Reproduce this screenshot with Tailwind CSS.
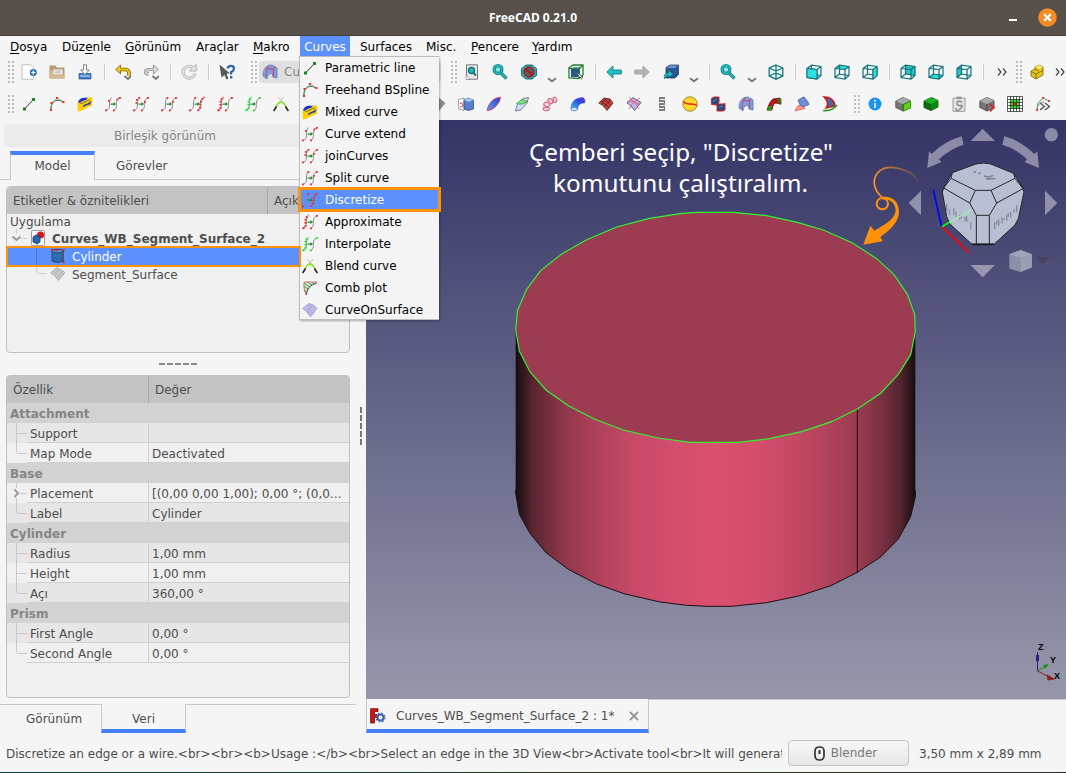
<!DOCTYPE html>
<html lang="tr">
<head>
<meta charset="utf-8">
<title>FreeCAD 0.21.0</title>
<script src="https://cdn.jsdelivr.net/npm/@tailwindcss/browser@4"></script>
</head>
<body class="w-[1066px] h-[773px] overflow-hidden bg-[#f5f5f5] text-[12px] text-[#4d4d4d] font-['DejaVu_Sans',sans-serif]">
<svg class="absolute size-0">
<defs>
<linearGradient id="gb" x1="0" x2="1" y1="1" y2="0"><stop stop-color="#9cc4ff"/><stop offset=".3" stop-color="#2f8ff0"/><stop offset=".6" stop-color="#2f4fe0"/><stop offset="1" stop-color="#6a2be0"/></linearGradient>
<linearGradient id="gl" x1="0" x2="1" y1="1" y2="0"><stop stop-color="#5b9bff"/><stop offset="1" stop-color="#1c45c8"/></linearGradient>
<symbol id="line" viewBox="0 0 16 16"><path d="M3.500 13 12.500 3.500" stroke="#333" fill="none"/><rect x="2" y="11.500" width="3" height="3" fill="#178a17"/><rect x="11" y="2" width="3" height="3" fill="#178a17"/></symbol>
<symbol id="free" viewBox="0 0 16 16"><path d="M2 15C1 9 4 5 8 4.500S13 6 15 6.500" stroke="#666" fill="none"/><path d="M2 14 3 7 8 2.500 15 6" stroke="#3db052" fill="none" stroke-width=".9"/><g fill="#f22"><rect x="1" y="13" width="2" height="2"/><rect x="1.500" y="6" width="2" height="2"/><rect x="7" y="1" width="2" height="2"/><rect x="13.500" y="5" width="2" height="2"/></g></symbol>
<symbol id="mixed" viewBox="0 0 16 16"><path d="M.5 7 4 4 14 1 15.500 2.500 15 10C11 10 8 14.500 .8 15.500Z" fill="#fc0"/><path d="M1 6C3 1 7 2 11 1.500L9 4C6 4 4 6.500 2 7Z" fill="#1634c9"/><path d="M6 10C8 7.500 10 8.500 14.500 5L13 8.500C10 8.500 8 10 6 11Z" fill="#1634c9"/><path d="M3 7.500C7 7.500 8 5 13 4" stroke="#8a8250" fill="none" stroke-width="1.200"/></symbol>
<symbol id="cv" viewBox="0 0 16 16"><path d="M.5 14.500C5 14 4.500 9 4.500 7S5 3 6.500 1.500M8.500 14.500C12.500 13 11 9 11.500 6S13 3 15.500 1.500" stroke="#888" fill="none"/><path d="M5.500 7.500H8.500V6L11 8 8.500 10V8.800H5.500Z" fill="#258a2c"/></symbol>
<symbol id="extend" viewBox="0 0 16 16"><use href="#cv"/><g fill="#f22"><rect y="13.500" width="1.800" height="1.800"/><rect x="8" y="13.500" width="1.800" height="1.800"/><rect x="3" y="4" width="1.800" height="1.800"/><rect x="14" y="1" width="1.800" height="1.800"/><rect x="11.500" y="2.500" width="1.800" height="1.800"/></g></symbol>
<symbol id="join" viewBox="0 0 16 16"><use href="#cv"/><g fill="#f22"><rect y="13.500" width="1.800" height="1.800"/><rect x="2.500" y="6" width="1.800" height="1.800"/><rect x="3" y="3" width="1.800" height="1.800"/><rect x="5.500" y="1" width="1.800" height="1.800"/><rect x="8" y="13.500" width="1.800" height="1.800"/><rect x="14" y="1" width="1.800" height="1.800"/><rect x="11" y="5" width="1.800" height="1.800"/></g></symbol>
<symbol id="split" viewBox="0 0 16 16"><use href="#cv"/><g fill="#f22"><rect y="13.500" width="1.800" height="1.800"/><rect x="5.500" y="1" width="1.800" height="1.800"/><rect x="8" y="13.500" width="1.800" height="1.800"/><rect x="14" y="1" width="1.800" height="1.800"/><rect x="11" y="5" width="1.800" height="1.800"/></g></symbol>
<symbol id="disc" viewBox="0 0 16 16"><use href="#cv"/><path d="M8.500 14.500C12.500 13 11 9 12 6S13 3 15.500 1" stroke="#f22" fill="none" stroke-width="1.900" stroke-dasharray="1.900 1.200"/><g fill="#f22"><rect y="13.500" width="1.800" height="1.800"/><rect x="5.500" y="1" width="1.800" height="1.800"/></g></symbol>
<symbol id="appr" viewBox="0 0 16 16"><use href="#cv"/><path d="M.5 14.500C5 14 3 9 3.500 6S5 3 6.500 1" stroke="#f22" fill="none" stroke-width="1.900" stroke-dasharray="1.900 1.200"/><g fill="#f22"><rect x="8" y="13.500" width="1.800" height="1.800"/><rect x="14" y="1" width="1.800" height="1.800"/></g></symbol>
<symbol id="inter" viewBox="0 0 16 16"><use href="#cv"/><path d="M.5 14.500C5 14 3 9 3.500 6S5 3 6.500 1" stroke="#1e2" fill="none" stroke-width="1.900" stroke-dasharray="1.900 1.200"/><g fill="#1e2"><rect x="8" y="13.500" width="1.800" height="1.800"/><rect x="14" y="1" width="1.800" height="1.800"/></g></symbol>
<symbol id="blend" viewBox="0 0 16 16"><path d="M5 1 9.500 6M11 1 6.500 6" stroke="#bbb" fill="none" stroke-width=".9"/><path d="M3 11C6 4.500 10 4.500 13 11" stroke="#8be02a" fill="none" stroke-width="1.600"/><path d="M.6 15 3.500 10.500M15.400 15 12.500 10.500" stroke="#222" stroke-width="1.600"/></symbol>
<symbol id="comb" viewBox="0 0 16 16"><path d="M2 2H15L9 6 5 14 2 11Z" fill="#cfe5d2"/><path d="M4.500 15C4.500 9 8 5 15 3" stroke="#444" fill="none"/><path d="M2 3 8 7M1.500 6 6 9M2 10 5 12M6 2 10 5M10 2 12 4" stroke="#2a9d3c" stroke-width=".9"/><path d="M15 2H2V7Q2 11 4 15" stroke="#d66" fill="none" stroke-width=".9"/></symbol>
<symbol id="cos" viewBox="0 0 16 16"><path d="M.5 6.500 7 1.500Q12 2 15 6.500L8.500 15Q5 9 .5 6.500Z" fill="#b4b8f5" stroke="#8a8fc5" stroke-width=".6"/><path d="M6.500 11Q6 6 11 4" stroke="#f09060" fill="none" stroke-width="1.200" stroke-dasharray="2 1"/></symbol>
<symbol id="new" viewBox="0 0 16 16"><path d="M1 .7H9.500L12.500 4V15.300H1Z" fill="#fff" stroke="#b5b5b5" stroke-width=".8"/><circle cx="12.300" cy="8.500" r="3.500" fill="#2e6db4"/><path d="M12.300 6.300v4.400M10.100 8.500h4.400" stroke="#fff" stroke-width="1.200"/></symbol>
<symbol id="open" viewBox="0 0 16 16"><path d="M.5 1.500H6.500L8 3.500H15.500V14.500H.5Z" fill="#b79b73"/><path d="M4.500 5.500h9v5H4.500Z" fill="#f8f8f8"/><path d="M6 7h6M6 8.800h6" stroke="#999" stroke-width=".8"/><path d="M.5 6.500H4V11H15.500v3.500H.5Z" fill="#d3ba94"/></symbol>
<symbol id="save" viewBox="0 0 16 16"><path d="M2 9.500H14V15H2Z" fill="#3f7cc4" stroke="#23558f" stroke-width=".7"/><path d="M3 12h10" stroke="#9fc4ef" stroke-width="1.500"/><path d="M6.500.8h3V6h2.800L8 10.500 3.700 6h2.800Z" fill="#fafafa" stroke="#777" stroke-width=".9"/></symbol>
<symbol id="undo" viewBox="0 0 16 16"><path d="M4.500 5.500H11Q14.500 6 14 12" stroke="#806000" fill="none" stroke-width="3.600"/><path d="M.7 5.500 5.500 1v9Z" fill="#f0c91e" stroke="#806000" stroke-width=".8"/><path d="M4.500 5.500H11Q14.500 6 14 12" stroke="#f0c91e" fill="none" stroke-width="2"/><path d="M9.500 12 13 15 16 12" stroke="#777" fill="none" stroke-width="1.800"/></symbol>
<symbol id="redo" viewBox="0 0 16 16"><path d="M11 5.500H5.500Q2 6 2.500 8T6 10" stroke="#888" fill="none" stroke-width="3.200"/><path d="M15.300 5.500 10.500 1v9Z" fill="#ddd" stroke="#888" stroke-width=".8"/><path d="M11 5.500H5.500Q2 6 2.500 8T6 10" stroke="#ddd" fill="none" stroke-width="1.600"/><path d="M9.500 12 13 15 16 12" stroke="#777" fill="none" stroke-width="1.800"/></symbol>
<symbol id="refr" viewBox="0 0 16 16"><path d="M12.500 4A6 6 0 1 0 14 9.500" stroke="#b0b0b0" fill="none" stroke-width="3"/><path d="M15.200 .5V7H8.500Z" fill="#e8e8e8" stroke="#b0b0b0"/><path d="M12.500 4A6 6 0 1 0 14 9.500" stroke="#eee" fill="none" stroke-width="1.200"/></symbol>
<symbol id="whats" viewBox="0 0 16 16"><path d="M8.500 4.500Q9 1.800 12 1.800T15 4.500Q15 7 12 8V10.500" stroke="#3565a4" fill="none" stroke-width="2.200"/><rect x="11" y="12" width="2.300" height="2.500" fill="#3565a4"/><path d="M.5.5 10.500 9 7.500 10 9.500 14.500 7.500 15.500 5.500 11 2.500 13.500Z" fill="#555c57"/></symbol>
<symbol id="wb" viewBox="0 0 16 16"><path d="M1 12C1 5 4 1 10 1L15 4V14L11 13Q11 9 9 9.500Q5.500 10 5 15Z" fill="#7ba0e2" stroke="#5a78bb" stroke-width=".8"/><path d="M4 13Q4 5 7 1.500M11.500 13V5L13 2.500M5 4.500 12 5" stroke="#d33a60" fill="none"/></symbol>
<symbol id="mag" viewBox="0 0 16 16"><path d="M9 9 14.500 14.500" stroke="#137f84" stroke-width="3.200"/><circle cx="6" cy="5.500" r="3.900" fill="#8fe3e6" stroke="#137f84" stroke-width="3.200"/><circle cx="6" cy="5.500" r="3.900" fill="none" stroke="#23bcc2" stroke-width="1.600"/><path d="M9.500 9.500 14.200 14.200" stroke="#23bcc2" stroke-width="1.600"/></symbol>
<symbol id="fit" viewBox="0 0 16 16"><path d="M2.500.8H13.500V15.200H2.500Z" fill="#e6e6e6" stroke="#777"/><circle cx="7.500" cy="6.500" r="3" fill="#1fb9be" stroke="#12747a" stroke-width="1.400"/><path d="M9.500 9 12 11.500" stroke="#12747a" stroke-width="2"/><path d="M2 11V15.500H6Z" fill="#fff" stroke="#777" stroke-width=".6"/></symbol>
<symbol id="nosty" viewBox="0 0 16 16"><path d="M.6 4.500 5 1H11L15.400 4.500V11.500L11 15H5L.6 11.500Z" fill="#20b5bb" stroke="#136a70"/><circle cx="8" cy="8" r="4.800" fill="#4a6669" stroke="#b81414" stroke-width="1.800"/><path d="M4.700 4.700 11.300 11.300" stroke="#b81414" stroke-width="2"/></symbol>
<symbol id="bsel" viewBox="0 0 16 16"><path d="M3 5 6 3H12V10L10 13H3Z" fill="#2b568c"/><path d="M3 5 6 3H12L10 5Z" fill="#7d9fc8"/><path d="M1 4 5 1H15V11L11 14.500 1 14V4L11 5V14M11 5 15 1" stroke="#1c7e2c" fill="none" stroke-width="1.300"/><path d="M8.500 8 15 13 12.500 13 14 15.500" fill="#fff" stroke="#333" stroke-width=".7"/></symbol>
<symbol id="back" viewBox="0 0 16 16"><path d="M.7 8 7 2V6H15.300V10H7V14Z" fill="#1fc0c5" stroke="#127479" stroke-width=".8"/></symbol>
<symbol id="fwd" viewBox="0 0 16 16"><path d="M15.300 8 9 2V6H.7V10H9V14Z" fill="#b5b5b5" stroke="#999" stroke-width=".8"/></symbol>
<symbol id="linked" viewBox="0 0 16 16"><path d="M3 3.500 7 1H15.500V10.500L12 14H3Z" fill="#2b5790" stroke="#173860" stroke-width=".7"/><path d="M3.500 4 7 1.500H15L12 4Z" fill="#6d98cf"/><path d="M1.500 15Q0 9 5.500 9V6.500L10 10 5.500 13.500V11.500Q2.500 11.500 1.500 15Z" fill="#1fc0c5" stroke="#127479" stroke-width=".7"/></symbol>
<symbol id="box" viewBox="0 0 16 16"><path d="M1 4.500 5.500 1.200 15 2.500V11.500L11 15 1 13.500ZM1 4.500 11 5.500V15M11 5.500 15 2.500M5.500 1.200V10L15 11.500M5.500 10 1 13.500" stroke="#137278" fill="none" stroke-width="1.200"/></symbol>
<symbol id="iso" viewBox="0 0 16 16"><path d="M8 1 14.800 4V12L8 15.200 1.200 12V4ZM1.200 4 8 7 14.800 4M8 7V15M8 1V6M1.200 12 8 9 14.800 12" fill="#e4f5f5" stroke="#15767c" stroke-width="1.300"/></symbol>
<symbol id="vf" viewBox="0 0 16 16"><use href="#box"/><path d="M1 4.500 11 5.500V15L1 13.500Z" fill="#2ddfe3" stroke="#137278"/></symbol>
<symbol id="vt" viewBox="0 0 16 16"><path d="M1 4.500 5.500 1.200 15 2.500 11 5.500Z" fill="#2ddfe3"/><use href="#box"/></symbol>
<symbol id="vr" viewBox="0 0 16 16"><use href="#box"/><path d="M11 5.500 15 2.500V11.500L11 15Z" fill="#2ddfe3" stroke="#137278"/></symbol>
<symbol id="vb" viewBox="0 0 16 16"><path d="M5.500 1.200 15 2.500V11.500L5.500 10Z" fill="#24c4c9"/><use href="#box"/></symbol>
<symbol id="vbo" viewBox="0 0 16 16"><path d="M1 13.500 5.500 10 15 11.500 11 15Z" fill="#2ddfe3"/><use href="#box"/></symbol>
<symbol id="vl" viewBox="0 0 16 16"><path d="M1 4.500 5.500 1.200V10L1 13.500Z" fill="#24c4c9"/><use href="#box"/></symbol>
<symbol id="part" viewBox="0 0 16 16"><path d="M2 7 6 5V3L10 1 14 3V11L7 15 2 12Z" fill="#e3c51b" stroke="#7a6500" stroke-width=".8"/><path d="M2 7.500 7 10V15M7 10 14 6.500M6 5 10 7" stroke="#7a6500" fill="none" stroke-width=".8"/><path d="M6 3 10 1 14 3 10 5Z" fill="#fbec6f"/></symbol>
<symbol id="ext" viewBox="0 0 16 16"><path d="M.6 3.500 6 2V14.500L.6 13Z" fill="#fff" stroke="#777" stroke-width=".7"/><path d="M2 8Q3 5 4.500 8T2 11" stroke="#e33" fill="none"/><path d="M6 4 10 2 15.500 4V13L10 14.500 6 13Z" fill="#5580c8" stroke="#2a4a86" stroke-width=".7"/><path d="M6 4 10 2 15.500 4 10.500 6Z" fill="#a9c5f2"/></symbol>
<symbol id="leaf" viewBox="0 0 16 16"><path d="M1.500 14.500Q1 10 7 4Q11 1 14.500 1.500Q14 6 10 10Q6 14.500 1.500 14.500Z" fill="url(#gl)" stroke="#d23a5c"/></symbol>
<symbol id="leaf2" viewBox="0 0 16 16"><path d="M1.500 15 3 9 9 2.500 14.500 1.500 13 7 7 14Z" fill="#cfdcf5" stroke="#667" stroke-width=".8"/><path d="M2.500 7.500 8 3.500 13.500 5.500 8.500 8 4 8Z" fill="#7fe58c" stroke="#2a8a3a" stroke-width=".7"/></symbol>
<symbol id="pipe" viewBox="0 0 16 16"><path d="M1 13Q1 3 12 1.500L14.500 6Q8 6 7.500 13.500Z" fill="#dfe2fa" stroke="#aab" stroke-width=".5"/><g fill="none" stroke="#e8434f" stroke-width=".9"><ellipse cx="4.200" cy="13" rx="3.200" ry="1.800"/><ellipse cx="4.800" cy="8.500" rx="3" ry="2" transform="rotate(15 5 8)"/><ellipse cx="8.500" cy="5" rx="3" ry="1.800" transform="rotate(50 8.500 5)"/><ellipse cx="13" cy="3.800" rx="1.800" ry="2.800" transform="rotate(-15 13 4)"/></g></symbol>
<symbol id="pipe2" viewBox="0 0 16 16"><path d="M1 13Q1 2 13 1.500Q16 4 14.500 7Q8 6 7.500 13.500Z" fill="url(#gb)" stroke="#3048b0" stroke-width=".6"/><ellipse cx="4.200" cy="13" rx="3.200" ry="1.800" fill="#b5f0ff" stroke="#46a" stroke-width=".7"/></symbol>
<symbol id="sred" viewBox="0 0 16 16"><path d="M.8 7 6 2 12 3 15 7 9 14.500Q5 8 .8 7Z" fill="#c84040" stroke="#521515" stroke-width=".8"/><path d="M3 5 11.500 11.500M6 2.500 13 9M3 8.500 8 3M6 11 12 4" stroke="#521515" stroke-width=".7"/></symbol>
<symbol id="sblu" viewBox="0 0 16 16"><path d="M1 7 7 1.500 15 6.500 8.500 14.500Q5 9 1 7Z" fill="#b6b4f4" stroke="#446" stroke-width=".8"/><path d="M3 1 6 4Q10 6 13 13M3 13Q5 8 9 5L14 2M1 6Q5 4 8 6T14 8" stroke="#e55" fill="none" stroke-width=".8"/></symbol>
<symbol id="coil" viewBox="0 0 16 16"><path d="M5 2H11M5 5H11M5 8H11M5 11H11M5 14H11" stroke="#555" stroke-width="1.500"/><path d="M5.500 2V5M10.500 5V8M5.500 8V11M10.500 11V14" stroke="#777"/></symbol>
<symbol id="ball" viewBox="0 0 16 16"><circle cx="8" cy="8" r="7.200" fill="#ffd92b" stroke="#8d7200" stroke-width=".8"/><path d="M1.200 5.500Q4 8.500 8 8T15 9.500" stroke="#e02a18" fill="none" stroke-width="1.500"/></symbol>
<symbol id="solid" viewBox="0 0 16 16"><path d="M1.500 2.500 4 1H9V6L8 8H13L15 7.500V14L13 15H7V9L1.500 8.500Z" fill="#27477c" stroke="#d92424"/><path d="M3 5.500 7 3M9 11.500 13 10" stroke="#6d8cc0"/></symbol>
<symbol id="bend" viewBox="0 0 16 16"><path d="M1 14Q3 6 7 3L14 2 15 8 10 7Q7 7 6 14Z" fill="#c11717" stroke="#4a1111" stroke-width=".8"/><path d="M1 14.500 5.500 14.500 6 10 2 10Z" fill="#3a8a1b"/><path d="M12 2 15.500 3 15 9 12 7Z" fill="#3f6d12"/></symbol>
<symbol id="cone" viewBox="0 0 16 16"><path d="M1 15 3.500 10 8 9 11 12.500Z" fill="#ff9a88" stroke="#d55" stroke-width=".7"/><path d="M4 4 10 .8 14 6 15 8.500 9 11 6 9Z" fill="#6d8fd8" stroke="#3e568f" stroke-width=".7"/></symbol>
<symbol id="sketch" viewBox="0 0 16 16"><path d="M2 1Q12 1 13 10L4 12Q8 7 2 1Z" fill="#4a66a5" stroke="#c11" stroke-width="1.300"/><path d="M1 14.500Q10 15.500 15 9" stroke="#2a9a36" fill="none" stroke-width="1.600"/></symbol>
<symbol id="info" viewBox="0 0 16 16"><circle cx="8" cy="8" r="6.500" fill="#1a94ee"/><path d="M8 7V12" stroke="#fff" stroke-width="1.500"/><circle cx="8" cy="4.700" r="1" fill="#fff"/></symbol>
<symbol id="cubeg" viewBox="0 0 16 16"><path d="M.8 5 8 1.500 15 4.500V11.500L8 15 .8 11.500Z" fill="#777" stroke="#444" stroke-width=".8"/><path d="M.8 5 8 1.500 15 4.500 8 8Z" fill="#aaa"/><path d="M8 8V15" stroke="#444"/></symbol>
<symbol id="cubex" viewBox="0 0 16 16"><use href="#cubeg"/><path d="M8.500 8.500 15.500 5V12L8.500 15.200Z" fill="#5bd212" stroke="#2f7707" stroke-width=".7"/></symbol>
<symbol id="green" viewBox="0 0 16 16"><path d="M1 5 8.500 1.500 15 4.500V11L8 14.500 1 11.500Z" fill="#0c6b10" stroke="#064508" stroke-width=".8"/><path d="M1 5 8.500 1.500 15 4.500 8 8Z" fill="#1bb324"/><path d="M8 8 15 4.500V11L8 14.500Z" fill="#0a8512"/></symbol>
<symbol id="clip" viewBox="0 0 16 16"><path d="M2 2H14V15.300H2Z" fill="#e3e3e3" stroke="#999"/><rect x="5.500" y=".6" width="5" height="2.600" fill="#999"/><path d="M11 6Q6 4 6 7T9.500 9.500 9 13 5 12" stroke="#888" fill="none" stroke-width="1.500"/></symbol>
<symbol id="cubea" viewBox="0 0 16 16"><use href="#cubeg"/><path d="M10.500 8 15 11.500 11 15.300" stroke="#e32222" fill="none" stroke-width="1.600"/></symbol>
<symbol id="gridi" viewBox="0 0 16 16"><rect x=".5" y=".5" width="15" height="15" fill="#fff"/><rect x="3.500" y="3.500" width="9" height="9" fill="#19e519"/><path d="M.5 3.500h15M.5 6.500h15M.5 9.500h15M.5 12.500h15M3.500.5v15M6.500.5v15M9.500.5v15M12.500.5v15M.5.5h15v15H.5Z" stroke="#1b1b1b" fill="none" stroke-width=".7"/><rect x="6.500" y="6.500" width="3" height="3" fill="#e11"/></symbol>
<symbol id="frec" viewBox="0 0 16 16"><path d="M2 14 3 7 8 2 14 5" stroke="#45a860" fill="none"/><path d="M2 14Q2 7 9 6" stroke="#888" fill="none"/><path d="M5 7 9.500 10.500 5 14M10 7 14.500 10.500 10 14" stroke="#555" fill="none" stroke-width="1.400"/><g fill="#f33"><rect x="1" y="13" width="2" height="2"/><rect x="7" y="1" width="2" height="2"/><rect x="13" y="4" width="2" height="2"/></g></symbol>
<symbol id="doc" viewBox="0 0 16 16"><rect x="1.500" y=".6" width="13" height="15" rx="1" fill="#fff" stroke="#999"/><circle cx="10.500" cy="5" r="3.600" fill="#d61a1a"/><path d="M3 7 6 5 10 6.500V12L7 14 3 12Z" fill="#2a62ad" stroke="#15355f" stroke-width=".8"/></symbol>
<symbol id="cyl" viewBox="0 0 16 16"><path d="M2 3V13Q8 16 13 13V3Z" fill="#2f6caf" stroke="#173c66" stroke-width=".8"/><ellipse cx="7.500" cy="3" rx="5.500" ry="1.800" fill="#5a92cc" stroke="#173c66" stroke-width=".8"/><path d="M2 2H7M13.500 3V13" stroke="#744" fill="none" stroke-width=".8"/><g fill="#d22"><rect x="1" y="1" width="2" height="2"/><rect x="6" y="1" width="2" height="2"/><rect x="12.500" y="1" width="2" height="2"/><rect x="12.500" y="13" width="2" height="2"/></g></symbol>
<symbol id="seg" viewBox="0 0 16 16"><path d="M.8 7 7 1.500 15 6.500 8.500 14.500Q5 9 .8 7Z" fill="#cdcdcd" stroke="#999" stroke-width=".8"/><path d="M3 5 11 11.500M6 3 13 9M4 9 10 3M7 12 13 5" stroke="#aaa" stroke-width=".7"/></symbol>
<symbol id="fc" viewBox="0 0 16 16"><path d="M.6.7H8V3.500H4.500V6.500H7V9.500H4.500V15H.6Z" fill="#d41414" stroke="#6a0b0b" stroke-width=".8"/><circle cx="10.500" cy="9.500" r="2.900" fill="#f5f5f5" stroke="#3f69a8" stroke-width="2"/><circle cx="10.500" cy="9.500" r="4.400" fill="none" stroke="#3f69a8" stroke-width="1.300" stroke-dasharray="1.800 1.655"/></symbol>
<symbol id="grip" viewBox="0 0 6 22"><path d="M1 0V22M5 0V22" stroke="#bcbcbc" stroke-width="2" stroke-dasharray="2 2"/></symbol>
<symbol id="chev" viewBox="0 0 10 6"><path d="M1 1.200 5 4.200 9 1.200" stroke="#777" fill="none" stroke-width="1.900"/></symbol>
<symbol id="more" viewBox="0 0 10 8"><path d="M1 .5 4 4 1 7.500M6 .5 9 4 6 7.500" stroke="#444" fill="none" stroke-width="1.200"/></symbol>
</defs>
</svg>

<div class="relative flex h-full flex-col">
  <header class="flex h-9 shrink-0 items-center border-b border-[#433c38] bg-[#57504b] pr-[9px]">
    <div class="w-[1009px] pl-[57px] text-center text-[12px] font-bold text-white font-['Noto_Sans',sans-serif]"><span>FreeCAD 0.21.0</span></div>
    <div class="mt-1 h-[2px] w-2 shrink-0 bg-white"></div>
    <svg class="ml-auto h-[19px] w-[19px] shrink-0" viewBox="0 0 19 19"><circle cx="9.500" cy="9.500" r="9.300" fill="#f68b28"/><path d="M6.200 6.200 12.800 12.800M12.800 6.200 6.200 12.800" stroke="#fff" stroke-width="2.200"/></svg>
  </header>

  <nav class="flex h-5 shrink-0 pl-1 leading-[22px] text-black">
    <span class="w-[52px] pl-[6px]"><u class="underline-offset-2">D</u>osya</span>
    <span class="w-[63px] pl-[6px]">Düz<u class="underline-offset-2">e</u>nle</span>
    <span class="w-[71px] pl-[6px]"><u class="underline-offset-2">G</u>örünüm</span>
    <span class="w-[57px] pl-[6px]">Araçlar</span>
    <span class="w-[53px] pl-[6px]"><u class="underline-offset-2">M</u>akro</span>
    <span class="h-5 w-[50px] bg-[#5c90fc] text-center text-white">Curves</span>
    <span class="w-[70px] pl-[10px]">Surfaces</span>
    <span class="w-[45px] pl-[6px]">Misc.</span>
    <span class="w-[61px] pl-[6px]"><u class="underline-offset-2">P</u>encere</span>
    <span class="pl-[6px]"><u class="underline-offset-2">Y</u>ardım</span>
  </nav>

  <div class="flex h-8 shrink-0 items-center pl-2 [&>i]:mx-[4.500px] [&>i]:h-4 [&>i]:w-px [&>i]:shrink-0 [&>i]:bg-[#d0d0d0] [&>svg]:shrink-0">
    <svg class="mr-px h-[22px] w-1.5"><use href="#grip"/></svg>
    <svg class="mx-1.5 size-4"><use href="#new"/></svg>
    <svg class="mx-1.5 size-4"><use href="#open"/></svg>
    <svg class="mx-1.5 size-4"><use href="#save"/></svg><i></i>
    <svg class="mx-1.5 size-4"><use href="#undo"/></svg>
    <svg class="mx-1.5 size-4"><use href="#redo"/></svg><i></i>
    <svg class="mx-1.5 size-4"><use href="#refr"/></svg><i></i>
    <svg class="mx-1.5 size-4"><use href="#whats"/></svg>
    <svg class="ml-[10px] h-[22px] w-1.5"><use href="#grip"/></svg>
    <div class="ml-[2px] flex h-[22px] w-[182px] shrink-0 items-center rounded bg-[#dfdfdf] pl-[3px] text-[#858585]"><svg class="mr-1.5 size-4"><use href="#wb"/></svg>Curves</div>
    <svg class="ml-[10px] mr-px h-[22px] w-1.5"><use href="#grip"/></svg>
    <svg class="mx-1.5 size-4"><use href="#fit"/></svg>
    <svg class="mx-1.5 size-4"><use href="#mag"/></svg>
    <svg class="ml-[7px] mr-1.5 size-4"><use href="#nosty"/></svg>
    <svg class="ml-[4px] mr-[5px] mt-[15px] h-1.5 w-[10px]"><use href="#chev"/></svg>
    <svg class="mx-1.5 size-4"><use href="#bsel"/></svg><i></i>
    <svg class="mx-1.5 size-4"><use href="#back"/></svg>
    <svg class="mx-1.5 size-4"><use href="#fwd"/></svg>
    <svg class="ml-[7px] mr-1.5 size-4"><use href="#linked"/></svg>
    <svg class="ml-[4px] mr-[5px] mt-[15px] h-1.5 w-[10px]"><use href="#chev"/></svg><i></i>
    <svg class="mx-1.5 size-4"><use href="#mag"/></svg>
    <svg class="mx-[5px] mt-[15px] h-1.5 w-[10px]"><use href="#chev"/></svg>
    <svg class="mx-1.5 size-4"><use href="#iso"/></svg><i></i>
    <svg class="mx-1.5 size-4"><use href="#vf"/></svg>
    <svg class="mx-1.5 size-4"><use href="#vt"/></svg>
    <svg class="mx-1.5 size-4"><use href="#vr"/></svg><i></i>
    <svg class="mx-1.5 size-4"><use href="#vb"/></svg>
    <svg class="mx-1.5 size-4"><use href="#vbo"/></svg>
    <svg class="mx-1.5 size-4"><use href="#vl"/></svg><i></i>
    <svg class="ml-[9px] mr-[9px] h-2 w-[10px]"><use href="#more"/></svg>
    <svg class="mr-px h-[22px] w-1.5"><use href="#grip"/></svg>
    <svg class="mx-1.5 size-4"><use href="#part"/></svg>
    <svg class="ml-[4px] h-2 w-[10px]"><use href="#more"/></svg>
  </div>

  <div class="flex h-8 shrink-0 items-center pl-2 [&>svg]:shrink-0">
    <svg class="mr-px h-[18px] w-1.5" viewBox="0 0 6 18"><path d="M1 0V18M5 0V18" stroke="#bcbcbc" stroke-width="2" stroke-dasharray="2 2"/></svg>
    <svg class="mx-1.5 size-4"><use href="#line"/></svg>
    <svg class="mx-1.5 size-4"><use href="#free"/></svg>
    <svg class="mx-1.5 size-4"><use href="#mixed"/></svg>
    <svg class="mx-1.5 size-4"><use href="#extend"/></svg>
    <svg class="mx-1.5 size-4"><use href="#join"/></svg>
    <svg class="mx-1.5 size-4"><use href="#split"/></svg>
    <svg class="mx-1.5 size-4"><use href="#disc"/></svg>
    <svg class="mx-1.5 size-4"><use href="#appr"/></svg>
    <svg class="mx-1.5 size-4"><use href="#inter"/></svg>
    <svg class="mx-1.5 size-4"><use href="#blend"/></svg>
    <svg class="ml-[135px] mr-1.5 size-4" viewBox="0 0 16 16"><path d="M0 8 8 1 15.500 7 9 15Z" fill="#8d8d8d"/></svg>
    <svg class="mx-1.5 size-4"><use href="#ext"/></svg>
    <svg class="mx-1.5 size-4"><use href="#leaf"/></svg>
    <svg class="mx-1.5 size-4"><use href="#leaf2"/></svg>
    <svg class="mx-1.5 size-4"><use href="#pipe"/></svg>
    <svg class="mx-1.5 size-4"><use href="#pipe2"/></svg>
    <svg class="mx-1.5 size-4"><use href="#sred"/></svg>
    <svg class="mx-1.5 size-4"><use href="#sblu"/></svg>
    <svg class="mx-1.5 size-4"><use href="#coil"/></svg>
    <svg class="mx-1.5 size-4"><use href="#ball"/></svg>
    <svg class="mx-1.5 size-4"><use href="#solid"/></svg>
    <svg class="mx-1.5 size-4"><use href="#wb"/></svg>
    <svg class="mx-1.5 size-4"><use href="#bend"/></svg>
    <svg class="mx-1.5 size-4"><use href="#cone"/></svg>
    <svg class="mx-1.5 size-4"><use href="#sketch"/></svg>
    <svg class="ml-[10px] mr-px h-[18px] w-1.5" viewBox="0 0 6 18"><path d="M1 0V18M5 0V18" stroke="#bcbcbc" stroke-width="2" stroke-dasharray="2 2"/></svg>
    <svg class="mx-1.5 size-4"><use href="#info"/></svg>
    <svg class="mx-1.5 size-4"><use href="#cubex"/></svg>
    <svg class="mx-1.5 size-4"><use href="#green"/></svg>
    <svg class="mx-1.5 size-4"><use href="#clip"/></svg>
    <svg class="mx-1.5 size-4"><use href="#cubea"/></svg>
    <svg class="mx-1.5 size-4"><use href="#gridi"/></svg>
    <svg class="mx-1.5 size-4"><use href="#frec"/></svg>
  </div>

  <main class="flex h-[613px] shrink-0">
    <aside class="flex w-[356px] shrink-0 flex-col pt-1">
      <div class="ml-1 h-[23px] w-[348px] shrink-0 rounded-sm bg-[#ebebeb] pl-[110px] leading-[24px] text-[#858585]">Birleşik görünüm</div>
      <div class="mt-1 flex h-[29px] shrink-0">
        <div class="w-[10px] border-b border-[#c8c8c8]"></div>
        <div class="w-[85px] border-x border-t-4 border-x-[#c8c8c8] border-t-[#4680f8] text-center leading-[22px]">Model</div>
        <div class="flex-1 border-b border-[#c8c8c8] pl-[21px] leading-[30px]">Görevler</div>
      </div>
      <section class="ml-1.5 mt-1.5 h-[167px] w-[344px] shrink-0 overflow-hidden rounded border border-[#c0c0c0] bg-[#f0f0f0]">
        <div class="flex h-[27px] bg-[#c3c3c3] leading-7"><div class="w-[261px] border-r border-[#a8a8a8] pl-[6px]">Etiketler &amp; öznitelikleri</div><div class="pl-[6px]">Açıklama</div></div>
        <div class="h-[15px] pl-[3px] leading-[17px]">Uygulama</div>
        <div class="flex h-[18px] items-center font-bold"><svg class="h-[18px] w-[23px]" viewBox="0 0 23 18"><path d="M9.500 0V5M14 9.500H20" stroke="#ccc"/><path d="M5.500 7.500 9.500 11 13.500 7.500" stroke="#999" fill="none" stroke-width="2"/></svg><svg class="size-4"><use href="#doc"/></svg><span class="ml-[6px] -mb-px">Curves_WB_Segment_Surface_2</span></div>
        <div class="flex h-[18px] items-center bg-[#5c90fc] text-white"><svg class="mr-[13px] h-[18px] w-[30px]" viewBox="0 0 30 18"><path d="M29.500 0V18" stroke="#4877d8"/></svg><svg class="size-4"><use href="#cyl"/></svg><span class="ml-[6px] -mb-px">Cylinder</span></div>
        <div class="flex h-[18px] items-center"><svg class="mr-[3px] h-[18px] w-[40px]" viewBox="0 0 40 18"><path d="M29.500 0V6Q29.500 8.500 32 8.500H40" stroke="#ccc" fill="none"/></svg><svg class="size-4"><use href="#seg"/></svg><span class="ml-[6px] -mb-px">Segment_Surface</span></div>
      </section>
      <div class="flex h-[22px] shrink-0 items-center justify-center gap-[2px]"><div class="h-[2px] w-1.5 bg-[#8a8a8a]"></div><div class="h-[2px] w-1.5 bg-[#8a8a8a]"></div><div class="h-[2px] w-1.5 bg-[#8a8a8a]"></div><div class="h-[2px] w-1.5 bg-[#8a8a8a]"></div><div class="h-[2px] w-1.5 bg-[#8a8a8a]"></div></div>
      <section class="ml-1.5 h-[323px] w-[344px] shrink-0 overflow-hidden rounded border border-[#c0c0c0] bg-[#f0f0f0]">
        <div class="flex h-[27px] bg-[#c3c3c3] leading-7"><div class="w-[142px] border-r border-[#a8a8a8] pl-[6px]">Özellik</div><div class="pl-[6px]">Değer</div></div>
        <div class="h-5 bg-[#d2d2d2] pl-[3px] font-bold leading-[22px] text-[#858585]">Attachment</div>
        <div class="flex h-5 bg-[#e6e6e6] leading-[22px]"><svg class="h-5 w-5" viewBox="0 0 20 20"><path d="M9.500 0V20M9.500 10.500H20" stroke="#c8c8c8"/></svg><div class="w-[122px] border-b border-r border-[#d0d0d0] pl-[3px]">Support</div><div class="flex-1 border-b border-[#d0d0d0] pl-[3px]"></div></div>
        <div class="flex h-5 leading-[22px]"><svg class="h-5 w-5" viewBox="0 0 20 20"><path d="M9.500 0V8Q9.500 10.500 12 10.500H20" fill="none" stroke="#c8c8c8"/></svg><div class="w-[122px] border-b border-r border-[#d0d0d0] pl-[3px]">Map Mode</div><div class="flex-1 border-b border-[#d0d0d0] pl-[3px]">Deactivated</div></div>
        <div class="h-5 bg-[#d2d2d2] pl-[3px] font-bold leading-[22px] text-[#858585]">Base</div>
        <div class="flex h-5 leading-[22px]"><svg class="h-5 w-5" viewBox="0 0 20 20"><path d="M9.500 0V5M9.500 15V20M13 10.500H20" stroke="#c8c8c8"/><path d="M7.500 6.500 11 10.200 7.500 14" stroke="#999" fill="none" stroke-width="1.900"/></svg><div class="w-[122px] border-b border-r border-[#d0d0d0] pl-[3px]">Placement</div><div class="flex-1 whitespace-nowrap border-b border-[#d0d0d0] pl-[3px]">[(0,00 0,00 1,00); 0,00 °; (0,0…</div></div>
        <div class="flex h-5 bg-[#e6e6e6] leading-[22px]"><svg class="h-5 w-5" viewBox="0 0 20 20"><path d="M9.500 0V8Q9.500 10.500 12 10.500H20" fill="none" stroke="#c8c8c8"/></svg><div class="w-[122px] border-b border-r border-[#d0d0d0] pl-[3px]">Label</div><div class="flex-1 border-b border-[#d0d0d0] pl-[3px]">Cylinder</div></div>
        <div class="h-5 bg-[#d2d2d2] pl-[3px] font-bold leading-[22px] text-[#858585]">Cylinder</div>
        <div class="flex h-5 bg-[#e6e6e6] leading-[22px]"><svg class="h-5 w-5" viewBox="0 0 20 20"><path d="M9.500 0V20M9.500 10.500H20" stroke="#c8c8c8"/></svg><div class="w-[122px] border-b border-r border-[#d0d0d0] pl-[3px]">Radius</div><div class="flex-1 border-b border-[#d0d0d0] pl-[3px]">1,00 mm</div></div>
        <div class="flex h-5 leading-[22px]"><svg class="h-5 w-5" viewBox="0 0 20 20"><path d="M9.500 0V20M9.500 10.500H20" stroke="#c8c8c8"/></svg><div class="w-[122px] border-b border-r border-[#d0d0d0] pl-[3px]">Height</div><div class="flex-1 border-b border-[#d0d0d0] pl-[3px]">1,00 mm</div></div>
        <div class="flex h-5 bg-[#e6e6e6] leading-[22px]"><svg class="h-5 w-5" viewBox="0 0 20 20"><path d="M9.500 0V8Q9.500 10.500 12 10.500H20" fill="none" stroke="#c8c8c8"/></svg><div class="w-[122px] border-b border-r border-[#d0d0d0] pl-[3px]">Açı</div><div class="flex-1 border-b border-[#d0d0d0] pl-[3px]">360,00 °</div></div>
        <div class="h-5 bg-[#d2d2d2] pl-[3px] font-bold leading-[22px] text-[#858585]">Prism</div>
        <div class="flex h-5 bg-[#e6e6e6] leading-[22px]"><svg class="h-5 w-5" viewBox="0 0 20 20"><path d="M9.500 0V20M9.500 10.500H20" stroke="#c8c8c8"/></svg><div class="w-[122px] border-b border-r border-[#d0d0d0] pl-[3px]">First Angle</div><div class="flex-1 border-b border-[#d0d0d0] pl-[3px]">0,00 °</div></div>
        <div class="flex h-5 leading-[22px]"><svg class="h-5 w-5" viewBox="0 0 20 20"><path d="M9.500 0V8Q9.500 10.500 12 10.500H20" fill="none" stroke="#c8c8c8"/></svg><div class="w-[122px] border-b border-r border-[#d0d0d0] pl-[3px]">Second Angle</div><div class="flex-1 border-b border-[#d0d0d0] pl-[3px]">0,00 °</div></div>
      </section>
      <div class="mt-1.5 flex h-[29px] shrink-0 leading-[28px]">
        <div class="w-[101px] border-t border-[#c8c8c8] pl-[26px]">Görünüm</div>
        <div class="w-[85px] border-x border-b-4 border-x-[#c8c8c8] border-b-[#4680f8] text-center leading-[30px]">Veri</div>
        <div class="flex-1 border-t border-[#c8c8c8]"></div>
      </div>
    </aside>
    <div class="flex w-[10px] shrink-0 flex-col items-center gap-[2px] pt-[287px]"><div class="h-1.5 w-[2px] bg-[#777]"></div><div class="h-1.5 w-[2px] bg-[#777]"></div><div class="h-1.5 w-[2px] bg-[#777]"></div><div class="h-1.5 w-[2px] bg-[#777]"></div><div class="h-1.5 w-[2px] bg-[#777]"></div></div>
    <div class="flex w-[700px] shrink-0 flex-col">
      <svg class="h-[579px] w-[700px] shrink-0" viewBox="366 120 700 579">
        <defs>
          <linearGradient id="bg" x1="0" x2="0" y1="0" y2="1"><stop stop-color="#343466"/><stop offset="1" stop-color="#9797ab"/></linearGradient>
          <linearGradient id="side" gradientUnits="userSpaceOnUse" x1="47" x2="1246" y1="0" y2="0"><stop stop-color="#150d10"/><stop offset=".045" stop-color="#5c2632"/><stop offset=".13" stop-color="#93384c"/><stop offset=".2" stop-color="#ae415a"/><stop offset=".3" stop-color="#c84a67"/><stop offset=".4" stop-color="#d44e6e"/><stop offset=".5" stop-color="#dc4f71"/><stop offset=".63" stop-color="#d04c6a"/><stop offset=".75" stop-color="#ba455f"/><stop offset=".855" stop-color="#9c3b51"/><stop offset=".92" stop-color="#763040"/><stop offset=".965" stop-color="#51232d"/><stop offset="1" stop-color="#150d10"/></linearGradient>
          <linearGradient id="tail" gradientUnits="userSpaceOnUse" x1="205" x2="75" y1="180" y2="200"><stop stop-color="#ff9200" stop-opacity=".15"/><stop offset="1" stop-color="#ff9228"/></linearGradient>
        </defs>
        <rect x="366" y="120" width="700" height="579" fill="url(#bg)"/>
        <g transform="translate(500 200) scale(.33333)">
          <path d="M47 388V880L58 943 90 1000 138 1058 205 1108 290 1152 375 1182 480 1206 560 1216 625 1219H695L800 1208 900 1187 993 1157 1072 1117 1143 1070 1195 1017 1232 950 1246 890V395Z" fill="url(#side)"/>
          <path d="M47 870V880L58 943 90 1000 138 1058 205 1108 290 1152 375 1182 480 1206 560 1216 625 1219H695L800 1208 900 1187 993 1157 1072 1117 1143 1070 1195 1017 1232 950 1246 890V870M1072 627V1117" fill="none" stroke="#1c1014" stroke-width="3"/>
          <path d="M590 37 545 40 445 56 350 81 260 119 185 162 122 212 80 268 53 330 47 388 58 453 90 515 138 570 205 617 285 658 370 690 475 714 570 727H715L808 716 905 695 995 665 1072 627 1143 579 1195 523 1232 464 1246 395 1244 343 1222 283 1182 224 1130 176 1058 129 970 90 895 68 800 47 700 37Z" fill="#9d3b53" stroke="#30f530" stroke-width="3.500"/>
        </g>
        <g fill="#fff" font-family="Noto Sans, sans-serif" font-size="24"><text x="529" y="161" textLength="304" lengthAdjust="spacingAndGlyphs">Çemberi seçip, "Discretize"</text><text x="553" y="192" textLength="255" lengthAdjust="spacingAndGlyphs">komutunu çalıştıralım.</text></g>
        <g transform="translate(850 120) scale(.33333)">
          <g fill="#fff" fill-opacity=".42"><path d="M362 63 398 26 435 63ZM362 435H435L398 472ZM213 212V286L176 249ZM585 212V286L622 249Z"/><circle cx="604" cy="44" r="20"/><path d="M335 49 341 74Q300 86 267 118L274 126 232 144 237 94 245 102Q286 62 335 49ZM463 49 457 74Q498 86 531 118L524 126 567 144 562 94 553 102Q512 62 463 49Z"/></g>
          <path d="M276 320 357 398" stroke="#f00" stroke-width="5"/>
          <path d="M378 132 400 129 422 132 491 160 519 206 522 216 505 296 495 315 432 373H366L300 312 290 290 277 216 281 204 307 158Z" fill="#b9bfd3" stroke="#23262c" stroke-width="3"/>
          <path d="M303 175 376 211H423L495 175M281 204 359 249 376 211M519 206 440 249 423 211M359 249 379 286H418L440 249M379 286V373M418 286V373M303 175 281 204M495 175 519 206M307 158 303 175M491 160 495 175" fill="none" stroke="#23262c" stroke-width="3"/><path d="M366 373H432" stroke="#16181c" stroke-width="5"/>
          <path d="M370 158 378 154M385 162 392 158M402 168 420 172M408 177 436 176M420 170 430 166" stroke="#777c88" stroke-width="4"/>
          <path d="M290 252V272M298 268V285M311 264V284M318 274V290M329 284V300M334 284V296M345 290V304M350 288V306M362 306V328" stroke="#8a8f9d" stroke-width="4"/><path d="M434 306V328M440 302V314M446 298V318M456 292V310M462 294V300M470 284V302M475 280V290M482 276V294M492 268V278M500 256V276" stroke="#858a98" stroke-width="4"/>
          <path d="M250 210 275 320" stroke="#00f" stroke-width="5"/><path d="M276 320 298 307" stroke="#0f0" stroke-width="5"/><path d="M298 307 366 269" stroke="#9cf0a8" stroke-width="4"/>
          <path d="M204 184C190 150 120 130 90 152C62 175 70 210 97 232" fill="none" stroke="url(#tail)" stroke-width="5"/>
          <circle cx="97" cy="251" r="17" fill="none" stroke="#ff9208" stroke-width="6"/>
          <path d="M92 232C125 225 149 245 147 280C143 310 120 330 91 351L98 364 40 374 61 317 73 332C112 310 134 295 137 272C136 248 120 236 98 239Z" fill="#ff9208"/>
          <path d="M478 403 512 390 546 403V442L512 456 478 446Z" fill="#8c8fa6"/><path d="M478 403 512 390 546 403 512 413Z" fill="#a1a4ba"/><path d="M512 413 546 403V442L512 456Z" fill="#9a9db3"/><path d="M557 411H600L579 433Z" fill="#44445f"/>
        </g>
        <path d="M1037.500 671V652" stroke="#22228a"/><rect x="1036" y="655" width="3" height="6" fill="#22228a"/><path d="M1037.500 671 1048 664.500" stroke="#228a22"/><path d="M1043 665 1049 664 1045 669Z" fill="#228a22"/><path d="M1037.500 671 1053 679" stroke="#8b2222"/><path d="M1047 675 1054 679 1048 680Z" fill="#8b2222" stroke="#8b2222"/>
        <g font-family="Liberation Sans, sans-serif" font-size="9" font-weight="bold" fill="#000"><text x="1038" y="650">Z</text><text x="1050" y="663">Y</text><text x="1054" y="679">X</text></g>
      </svg>
      <div class="flex h-[34px] shrink-0">
        <div class="flex w-[283px] items-center border-x border-b-4 border-x-[#c8c8c8] border-b-[#4680f8] pl-[3px] pt-1"><svg class="size-4"><use href="#fc"/></svg><span class="ml-[10px]">Curves_WB_Segment_Surface_2 : 1*</span><svg class="ml-auto mr-[9px] size-[10px]" viewBox="0 0 10 10"><path d="M1 1 9 9M9 1 1 9" stroke="#999" stroke-width="2"/></svg></div>
        <div class="flex-1 border-t border-[#c8c8c8]"></div>
      </div>
    </div>
  </main>

  <footer class="flex h-[39px] shrink-0 items-center pl-1.5">
    <div class="mt-[2px] w-[776px] shrink-0 overflow-hidden whitespace-nowrap">Discretize an edge or a wire.&lt;br&gt;&lt;br&gt;&lt;b&gt;Usage :&lt;/b&gt;&lt;br&gt;Select an edge in the 3D View&lt;br&gt;Activate tool&lt;br&gt;It will generate</div>
    <button class="ml-1.5 flex h-[26px] w-[121px] shrink-0 items-center justify-center gap-[6px] rounded border border-[#c4c4c4] bg-linear-to-b from-[#f7f7f7] to-[#e7e7e7] pr-1.5 pt-px text-[#777]"><svg class="h-[15px] w-[11px]" viewBox="0 0 11 15"><rect x="1" y="1" width="9" height="13" rx="4" fill="none" stroke="#333" stroke-width="1.700"/><rect x="4.500" y="4" width="2" height="4" fill="#333"/></svg>Blender</button>
    <div class="ml-[10px] mt-[2px] whitespace-nowrap">3,50 mm x 2,89 mm</div>
  </footer>
  <div class="h-px shrink-0 bg-linear-to-r from-[#0c3f42] via-[#22361a] to-[#2e2b20]"></div>

  <div class="absolute left-[299px] top-[56px] h-[264px] w-[140px] border border-r-0 border-[#bdbdbd] bg-[#f4f4f4] leading-[22px] text-black shadow-[1px_1px_2px_rgba(0,0,0,.3)] [&>div]:flex [&>div]:h-[22px] [&>div]:items-center [&>div]:gap-[7px] [&>div]:whitespace-nowrap [&>div]:pl-[2px] [&_svg]:size-4 [&_svg]:shrink-0">
    <div><svg><use href="#line"/></svg>Parametric line</div>
    <div><svg><use href="#free"/></svg>Freehand BSpline</div>
    <div><svg><use href="#mixed"/></svg>Mixed curve</div>
    <div><svg><use href="#extend"/></svg>Curve extend</div>
    <div><svg><use href="#join"/></svg>joinCurves</div>
    <div><svg><use href="#split"/></svg>Split curve</div>
    <div class="bg-[#5c90fc] text-white"><svg><use href="#disc"/></svg>Discretize</div>
    <div><svg><use href="#appr"/></svg>Approximate</div>
    <div><svg><use href="#inter"/></svg>Interpolate</div>
    <div><svg><use href="#blend"/></svg>Blend curve</div>
    <div><svg><use href="#comb"/></svg>Comb plot</div>
    <div><svg><use href="#cos"/></svg>CurveOnSurface</div>
  </div>
  <div class="absolute left-[298px] top-[187px] h-[25px] w-[143px] border-3 border-[#ff9208]"></div>
  <div class="absolute left-[6px] top-[246px] h-[21px] w-[295px] border-2 border-[#ff9208]"></div>
</div>
</body>
</html>
